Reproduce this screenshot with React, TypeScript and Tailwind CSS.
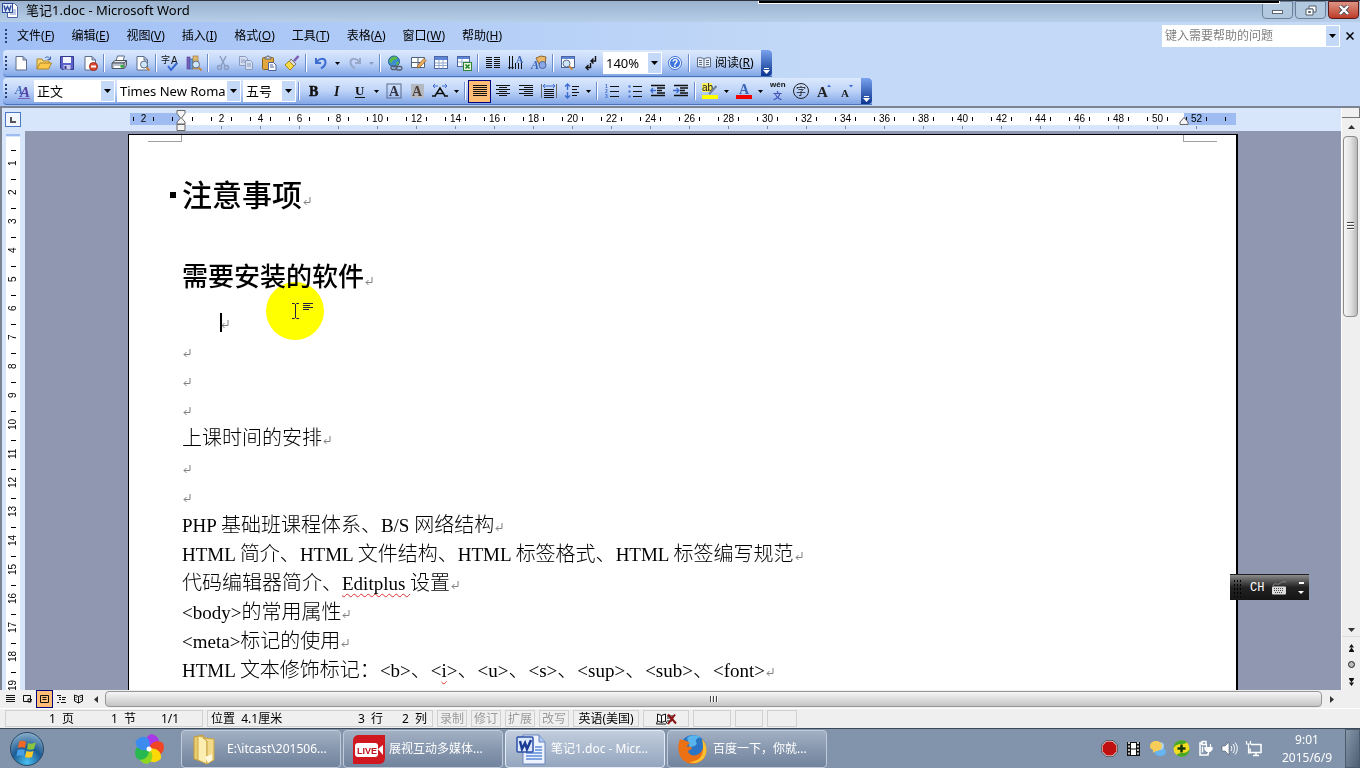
import type { ReactNode } from "react";

const UI = "font-['Noto_Sans','Noto_Sans_CJK_SC',sans-serif]";
const DOC = "font-['Liberation_Serif','Noto_Sans_CJK_SC',serif]";

const MENUS = [
  ["文件", "F"],
  ["编辑", "E"],
  ["视图", "V"],
  ["插入", "I"],
  ["格式", "O"],
  ["工具", "T"],
  ["表格", "A"],
  ["窗口", "W"],
  ["帮助", "H"],
];

// ---------- toolbar glyphs, all on a 16x16 grid ----------

const page = (
  <path d="M3 1.5h7l3.500 3.500v10H3z M10 1.500v3.500h3.500" fill="#fff" stroke="#5c6c8c" />
);
const lens = (
  <>
    <path d="M12.500 12.500l3 3" stroke="#c8843c" strokeWidth="2" />
    <circle cx="10" cy="9.500" r="3.500" fill="#cfe6fa" stroke="#5a6b85" />
  </>
);
const bars = (rows: [number, number][]) =>
  rows.map(([x, w], i) => <rect key={i} x={x} y={2 + i * 2} width={w} height="1" fill="#111" />);

const ICONS: Record<string, ReactNode> = {
  new: page,
  open: (
    <>
      <path d="M1 14V4h5l1 2h6v3" fill="#f7d774" stroke="#b08420" />
      <path d="M1 14l3-6h11.500l-3 6z" fill="#fbc84c" stroke="#b08420" />
      <path d="M9 3c2-2 4-1 5 1M14.500 1.500V4.500H11.500" fill="none" stroke="#3a62b0" />
    </>
  ),
  save: (
    <>
      <path d="M1.500 1.500h13v13H3l-1.500-1.500z" fill="#5c62cc" stroke="#33388c" />
      <rect x="4" y="2" width="8" height="6" fill="#f4f6ff" />
      <rect x="4.500" y="10" width="7" height="4.500" fill="#c9cdea" />
      <rect x="5.500" y="11" width="2" height="3" fill="#33388c" />
    </>
  ),
  permission: (
    <>
      {page}
      <circle cx="11.500" cy="11.500" r="4" fill="#dc4630" stroke="#a02c18" />
      <rect x="9" y="10.500" width="5" height="2" fill="#fff" />
    </>
  ),
  print: (
    <>
      <path d="M5 6l1.500-5h7l-1.500 5" fill="#fff" stroke="#5c6c8c" />
      <path d="M1 8l3-2.500h11.500L13 8z" fill="#e8ecf4" stroke="#555" />
      <path d="M1 8h12v5.500H1zM13 8l2.500-2.500v5L13 13.500" fill="#b8c0cc" stroke="#4c5464" />
      <rect x="3" y="11" width="7" height="2" fill="#fff" />
      <rect x="9.500" y="10" width="3" height="2.500" fill="#28b428" />
    </>
  ),
  preview: (
    <>
      {page}
      {lens}
    </>
  ),
  spell: (
    <>
      <text x="-2" y="8" fontSize="9" fill="#111" fontFamily="Noto Sans CJK SC">字</text>
      <text x="8" y="9" fontSize="10" fill="#111" fontFamily="Liberation Sans">A</text>
      <path d="M5 11l3 4 6-7" fill="none" stroke="#3468d0" strokeWidth="2" />
    </>
  ),
  research: (
    <>
      <rect x="1" y="2" width="3" height="12" fill="#7c60c0" stroke="#4c3c88" strokeWidth=".6" />
      <rect x="4" y="4" width="3" height="10" fill="#6c9ce0" stroke="#38609c" strokeWidth=".6" />
      <rect x="7" y="1" width="5" height="13" fill="#dcb870" stroke="#94702c" strokeWidth=".6" />
      {lens}
    </>
  ),
  cut: (
    <g fill="none" stroke="#8c9cc0" strokeWidth="1.400">
      <path d="M5 1l5 10M11 1L6 11" />
      <circle cx="4.500" cy="12.500" r="2" />
      <circle cx="11.500" cy="12.500" r="2" />
    </g>
  ),
  copy: (
    <g fill="#d4def0" stroke="#8c9cc0">
      <path d="M1.500 1.500h6l2 2v7h-8zM3 5h4M3 7h4" />
      <path d="M7.500 5.500h5l2 2v7h-7zM9 9h4M9 11h4" />
    </g>
  ),
  paste: (
    <>
      <rect x="1.500" y="2.500" width="11" height="12" rx="1" fill="#e0a83c" stroke="#8c6420" />
      <path d="M4 4V2h2l1-1.500L8 2h2v2z" fill="#d8dce8" stroke="#666" />
      <path d="M7.500 7.500h5l2.500 2.500v5.500H7.500zM9 10h3M9 12h4" fill="#fff" stroke="#4c64a0" />
    </>
  ),
  brush: (
    <>
      <path d="M14.500 1L10 6" stroke="#7c5cb8" strokeWidth="2.500" />
      <path d="M7 4l5 5-2 2-5-4z" fill="#d8d8e0" stroke="#777" />
      <path d="M5 6l5 5-4 4-5-5z" fill="#f4d848" stroke="#a8881c" />
    </>
  ),
  undo: <path d="M3 3v5h5M3.500 7.500C6 3 12 2.500 12.500 7c.2 3-2 5-4.500 6.500" fill="none" stroke="#3c6cd0" strokeWidth="2" />,
  redo: <path d="M13 3v5H8M12.500 7.500C10 3 4 2.500 3.500 7c-.2 3 2 5 4.500 6.500" fill="none" stroke="#98a8c8" strokeWidth="2" />,
  link: (
    <>
      <circle cx="7" cy="6.500" r="5.500" fill="#3c8cd8" stroke="#285c94" />
      <path d="M3 4c2-3 5-3 7-2 1 2-1 3-3 3s-1 3-3 3-2-3-1-4zM9 8l2-2 1 2-2 3z" fill="#58b848" />
      <rect x="4" y="11" width="6" height="3.500" rx="1.700" fill="none" stroke="#555f70" strokeWidth="1.300" />
      <rect x="9" y="11.500" width="6" height="3.500" rx="1.700" fill="none" stroke="#555f70" strokeWidth="1.300" />
    </>
  ),
  drawTable: (
    <>
      <path d="M1.500 2.500h13v10h-13zM1.500 7.500h13M8 2.500v10" fill="#fff" stroke="#52627c" />
      <path d="M14 3.500L8 10l-1 3 3-1 6-6.500z" fill="#f0b060" stroke="#8c5c28" strokeWidth=".8" />
    </>
  ),
  table: (
    <>
      <rect x="1.500" y="1.500" width="13" height="12" fill="#fff" stroke="#4c64a0" />
      <rect x="2" y="2" width="12" height="3" fill="#5c84d8" />
      <path d="M2 8h12M2 10.500h12M6 5v8.500M10 5v8.500" stroke="#90a8cc" />
    </>
  ),
  excel: (
    <>
      <rect x="1.500" y="1.500" width="12" height="10" fill="#fff" stroke="#4c64a0" />
      <rect x="2" y="2" width="11" height="2" fill="#5c84d8" />
      <path d="M2 7h11M6 4v7" stroke="#90a8cc" />
      <rect x="7.500" y="7.500" width="8" height="8" fill="#e4f4e0" stroke="#308430" />
      <path d="M9.500 9.500l4 4M13.500 9.500l-4 4" stroke="#208420" strokeWidth="1.500" />
    </>
  ),
  columns: (
    <>
      {[3, 5, 7, 9, 11, 13].map((y) => (
        <path key={y} d={`M1 ${y - 0.5}h6M9 ${y - 0.5}h6`} stroke="#111" />
      ))}
    </>
  ),
  direction: (
    <>
      <path d="M1.500 1v13M4.500 1v13M7.500 8v6M10.500 8v6M13.500 8v6" stroke="#111" />
      <path d="M0 12l1.500 2.500L3 12zM3 12l1.500 2.500L6 12z" fill="#111" />
      <text x="8" y="8" fontSize="10" fontWeight="bold" fill="#3c64b4" fontFamily="Liberation Serif">A</text>
    </>
  ),
  drawing: (
    <>
      <path d="M5 3l5-2 5 1-1 7-5 2z" fill="#e8b868" stroke="#8c6434" />
      <circle cx="11.500" cy="10" r="3.500" fill="#88a8e8" stroke="#4c64a0" />
      <text x="0" y="14" fontSize="12" fontWeight="bold" fontStyle="italic" fill="#3c64b4" fontFamily="Liberation Serif">A</text>
    </>
  ),
  docMap: (
    <>
      <rect x="1.500" y="1.500" width="13" height="11" fill="#fff" stroke="#4c64a0" />
      <rect x="2" y="2" width="12" height="2" fill="#5c84d8" />
      <circle cx="6.500" cy="8.500" r="3.500" fill="#cfe6fa" stroke="#5a6b85" />
      <path d="M9 11l3.500 3.500" stroke="#c8843c" strokeWidth="2" />
    </>
  ),
  marks: (
    <g stroke="#111" strokeWidth="1.400" fill="none">
      <path d="M12.500 1v5H8M10.500 3.500L8 6l2.500 2.500" />
      <path d="M7.500 8v4.500H3M5.500 10L3 12.500 5.500 15" />
    </g>
  ),
  help: (
    <>
      <circle cx="8" cy="8" r="6.500" fill="#fff" stroke="#3c6cd0" />
      <circle cx="8" cy="8" r="5" fill="#3c74e0" />
      <text x="5" y="12" fontSize="10" fontWeight="bold" fill="#fff" fontFamily="Liberation Sans">?</text>
    </>
  ),
  book: (
    <path d="M8 4C6 2.500 3.500 2.500 1.500 3v9c2-.5 4.500-.5 6.500 1 2-1.500 4.500-1.500 6.500-1V3C12.500 2.500 10 2.500 8 4zM8 4v9M3 5.500h3M3 7.500h3M3 9.500h3M10 5.500h3M10 7.500h3M10 9.500h3" fill="#e8f0fc" stroke="#5c6880" />
  ),
  styles: (
    <g fontFamily="Liberation Serif" fontWeight="bold" fontStyle="italic">
      <text x="0" y="11" fontSize="12" fill="#3c64b4">A</text>
      <text x="5" y="14" fontSize="15" fill="#5444a8">A</text>
      <path d="M3 15.500h12" stroke="#7c5cb8" />
    </g>
  ),
  bold: <text x="3" y="13" fontSize="14" fontWeight="bold" fill="#111" fontFamily="Liberation Serif" stroke="#111" strokeWidth=".5">B</text>,
  italic: <text x="5" y="13" fontSize="14" fontWeight="bold" fontStyle="italic" fill="#111" fontFamily="Liberation Serif">I</text>,
  underline: (
    <>
      <text x="3" y="12" fontSize="13" fontWeight="bold" fill="#111" fontFamily="Liberation Serif">U</text>
      <path d="M3 14.500h10" stroke="#111" />
    </>
  ),
  charBorder: (
    <>
      <rect x="1" y="1" width="14" height="14" fill="none" stroke="#5c6c8c" />
      <text x="3" y="13" fontSize="14" fontWeight="bold" fill="#334" fontFamily="Liberation Serif">A</text>
    </>
  ),
  charShade: (
    <>
      <rect x="2" y="1" width="13" height="14" fill="#b4b8c0" />
      <text x="3" y="13" fontSize="14" fontWeight="bold" fill="#4c4038" fontFamily="Liberation Serif">A</text>
    </>
  ),
  charScale: (
    <>
      <path d="M0 13h4M12 13h4M3 13l5-8 5 8M5 10.500h6" fill="none" stroke="#111" strokeWidth="1.500" />
      <path d="M1 3h5M3 1L1 3l2 2M10 3h5M13 1l2 2-2 2" fill="none" stroke="#3c6cd0" />
    </>
  ),
  justify: bars([[1, 14], [1, 14], [1, 14], [1, 14], [1, 14], [1, 14]]),
  center: bars([[1, 14], [4, 8], [1, 14], [4, 8], [1, 14], [4, 8]]),
  right: bars([[1, 14], [6, 9], [1, 14], [6, 9], [1, 14], [6, 9]]),
  distribute: (
    <>
      <path d="M.5 1v14M15.500 1v14" stroke="#666" />
      <path d="M2 3h12M4 1L2 3l2 2M12 1l2 2-2 2" fill="none" stroke="#3c6cd0" />
      <path d="M3 6.500h10M3 8.500h10M3 10.500h10M3 12.500h10M3 14.500h10" stroke="#111" />
    </>
  ),
  spacing: (
    <>
      <path d="M3.500 1v6M3.500 9v6M1 3.500L3.500 1 6 3.500M1 12.500L3.500 15 6 12.500" fill="none" stroke="#3c6cd0" strokeWidth="1.400" />
      <path d="M8 3.500h7M8 6.500h5M8 9.500h7M8 12.500h5" stroke="#111" />
    </>
  ),
  numbers: (
    <>
      <g fontSize="5" fill="#3c6cd0" fontFamily="Liberation Sans" fontWeight="bold">
        <text x="1" y="5">1</text>
        <text x="1" y="10">2</text>
        <text x="1" y="15">3</text>
      </g>
      <path d="M6 3.500h9M6 8.500h9M6 13.500h9" stroke="#111" />
    </>
  ),
  bullets: (
    <>
      <path d="M1.500 2.500h2v2h-2zM1.500 7.500h2v2h-2zM1.500 12.500h2v2h-2z" fill="#3c6cd0" />
      <path d="M6 3.500h9M6 8.500h9M6 13.500h9" stroke="#111" />
    </>
  ),
  outdent: (
    <>
      <path d="M1 2.500h14M7 5h8M7 7.500h5M7 10h8M1 12.500h14" stroke="#111" strokeWidth="1.500" />
      <path d="M6 7.500H1M3 5L.8 7.500 3 10" fill="none" stroke="#3c6cd0" strokeWidth="1.300" />
    </>
  ),
  indent: (
    <>
      <path d="M1 2.500h14M7 5h8M7 7.500h5M7 10h8M1 12.500h14" stroke="#111" strokeWidth="1.500" />
      <path d="M0 7.500h5M3.500 5l2.500 2.500L3.500 10" fill="none" stroke="#3c6cd0" strokeWidth="1.300" />
    </>
  ),
  highlight: (
    <>
      <rect x="0" y="0" width="10" height="9" fill="#f8f060" />
      <text x="0" y="8" fontSize="10" fill="#111" fontFamily="Liberation Sans">ab</text>
      <path d="M14.500 3L8 10l-1 1" stroke="#6c7c98" strokeWidth="2" />
      <rect x="0" y="12" width="16" height="4" fill="#ffff00" />
    </>
  ),
  fontColor: (
    <>
      <text x="3" y="11" fontSize="14" fontWeight="bold" fill="#3c64b4" fontFamily="Liberation Serif">A</text>
      <rect x="0" y="12" width="16" height="4" fill="#f00000" />
    </>
  ),
  pinyin: (
    <>
      <text x="0" y="4" fontSize="8" fill="#111" fontWeight="bold" fontFamily="Liberation Sans">wén</text>
      <text x="3" y="16" fontSize="9" fontWeight="bold" fill="#4450b8" fontFamily="Noto Sans CJK SC">文</text>
    </>
  ),
  enclose: (
    <>
      <circle cx="8" cy="8" r="7.500" fill="none" stroke="#222" />
      <text x="3" y="12" fontSize="10" fill="#111" fontFamily="Noto Sans CJK SC">字</text>
    </>
  ),
  grow: (
    <>
      <text x="1" y="14" fontSize="15" fontWeight="bold" fill="#222" fontFamily="Liberation Serif">A</text>
      <path d="M11 4l2-2.500L15 4z" fill="#3c6cd0" />
    </>
  ),
  shrink: (
    <>
      <text x="2" y="14" fontSize="11" fontWeight="bold" fill="#222" fontFamily="Liberation Serif">A</text>
      <path d="M10 2l2 2.500L14 2z" fill="#3c6cd0" />
    </>
  ),
};

function Tool({ name, active }: { name: string; active?: boolean }) {
  return (
    <button
      aria-label={name}
      className={
        active
          ? "flex h-[23px] w-[23px] shrink-0 items-center justify-center border border-[#000080] bg-[#ffbd76]"
          : "flex h-[23px] w-[23px] shrink-0 items-center justify-center"
      }
    >
      <svg viewBox="0 0 16 16" className="h-4 w-4 overflow-visible">
        {ICONS[name]}
      </svg>
    </button>
  );
}

function Sep() {
  return (
    <span className="flex w-[6px] shrink-0 justify-center">
      <span className="h-[18px] w-px bg-[#6a8ccb]" />
      <span className="h-[18px] w-px bg-white" />
    </span>
  );
}

function Triangle({ color = "#000" }: { color?: string }) {
  return (
    <svg viewBox="0 0 7 4" className="h-[4px] w-[7px]">
      <path d="M0 0h7L3.500 4z" fill={color} />
    </svg>
  );
}

function Drop({ label, color = "#000" }: { label: string; color?: string }) {
  return (
    <button aria-label={label} className="flex w-[11px] shrink-0 items-center justify-center">
      <svg viewBox="0 0 5 3" className="h-[3px] w-[5px]">
        <path d="M0 0h5L2.500 3z" fill={color} />
      </svg>
    </button>
  );
}

function Combo({ label, value, className }: { label: string; value: string; className: string }) {
  return (
    <span className={`relative flex h-[22px] shrink-0 border border-white bg-white ${className}`}>
      <select
        aria-label={label}
        defaultValue={value}
        className="w-full appearance-none overflow-hidden bg-white pr-[14px] pl-[2px] text-[13px] leading-[20px] text-black"
      >
        <option>{value}</option>
      </select>
      <span className="pointer-events-none absolute inset-y-0 right-0 flex w-[13px] items-center justify-center bg-[#c3d9f7]">
        <Triangle />
      </span>
    </span>
  );
}

function Grip() {
  return (
    <span className="flex w-[6px] shrink-0 flex-col items-center gap-[2px]">
      {[0, 1, 2, 3].map((i) => (
        <span key={i} className="h-[2px] w-[2px] bg-[#27417a]" />
      ))}
    </span>
  );
}

function Toolbar({ children }: { children: ReactNode }) {
  return (
    <div className="ml-[3px] flex h-[27px] w-max items-stretch rounded-l border-b border-[#4a72b8] bg-linear-to-b from-[#dce9fd] via-[#bdd3f8] to-[#82a6e6]">
      <div className="flex items-center">{children}</div>
      <button
        aria-label="toolbar options"
        className="flex w-[11px] flex-col items-center justify-end gap-px rounded-r bg-linear-to-b from-[#7aa2ee] to-[#0c3590] pb-[2px]"
      >
        <span className="h-px w-[5px] bg-white" />
        <Triangle color="#fff" />
      </button>
    </div>
  );
}

function TitleBar() {
  return (
    <header className="relative flex h-[22px] shrink-0 items-start border-t border-[#2c3440] bg-linear-to-b from-[#9ab2cd] to-[#b6cee8] pl-[2px]">
      <svg viewBox="0 0 16 16" className="mt-px h-4 w-4">
        <path d="M5.500 1.500h7l3 3v11h-10z" fill="#fff" stroke="#4c64a0" />
        <path d="M8 8h6M8 10h6M8 12h6" stroke="#7c94c8" />
        <rect x=".5" y="1.500" width="10" height="9" fill="#e4ecfc" stroke="#2c4c9c" />
        <path d="M2 3.500l1.500 5 2-4 2 4 1.500-5" fill="none" stroke="#2c4c9c" strokeWidth="1.400" />
      </svg>
      <h1 className="ml-2 flex-1 text-[13px] leading-[18px] text-black">笔记1.doc - Microsoft Word</h1>
      <div className="flex h-[18px] items-stretch gap-[2px] pr-[1px]">
        <button aria-label="minimize" className="flex w-[31px] items-center justify-center rounded-b-sm border border-[#6b7f99] bg-[#b2c8df]">
          <span className="mt-1 h-[4px] w-[11px] border border-[#5c6470] bg-white" />
        </button>
        <button aria-label="restore" className="flex w-[31px] items-center justify-center rounded-b-sm border border-[#6b7f99] bg-[#b2c8df]">
          <svg viewBox="0 0 12 11" className="h-[11px] w-3">
            <path d="M4 1h7v6H8V4H4z" fill="#fff" stroke="#555f6c" />
            <path d="M1 4h7v6H1z" fill="#fff" stroke="#555f6c" />
            <path d="M3.500 6.500h2v1h-2z" fill="#fff" stroke="#555f6c" />
          </svg>
        </button>
        <button aria-label="close" className="flex w-[31px] items-center justify-center rounded-b-sm border border-[#5a1a1a] bg-linear-to-b from-[#dc9484] to-[#bc3a26]">
          <svg viewBox="0 0 12 10" className="h-[10px] w-3">
            <path d="M2 1l8 8M10 1L2 9" stroke="#444c58" strokeWidth="4" />
            <path d="M2 1l8 8M10 1L2 9" stroke="#fff" strokeWidth="2.400" />
          </svg>
        </button>
      </div>
      <span className="absolute top-0 right-[80px] h-[3px] w-[522px] border border-t-0 border-white bg-black" />
    </header>
  );
}

function MenuBar() {
  return (
    <nav className="flex h-[28px] shrink-0 items-center">
      <div className="flex items-center pl-[3px]">
        <Grip />
        <div className="ml-[8px] flex gap-[17px]">
          {MENUS.map(([name, key]) => (
            <button key={key} className="text-[12px] leading-[18px] text-black">
              {name}(<u>{key}</u>)
            </button>
          ))}
        </div>
      </div>
      <div className="ml-auto flex items-center">
        <span className="flex h-[22px] w-[178px] border border-white bg-white">
          <input
            aria-label="键入需要帮助的问题"
            placeholder="键入需要帮助的问题"
            className="w-[163px] bg-white pl-[2px] text-[12px] placeholder-[#808080]"
          />
          <button aria-label="help list" className="flex w-[13px] items-center justify-center bg-[#c3d9f7]">
            <Triangle />
          </button>
        </span>
        <button aria-label="close document" className="flex w-[20px] items-center justify-center">
          <svg viewBox="0 0 8 8" className="h-2 w-2">
            <path d="M.5.5l7 7M7.500.5l-7 7" stroke="#000" strokeWidth="1.500" />
          </svg>
        </button>
      </div>
    </nav>
  );
}

function StandardBar() {
  return (
    <Toolbar>
      <Grip />
      {["new", "open", "save", "permission"].map((n) => <Tool key={n} name={n} />)}
      <Sep />
      {["print", "preview"].map((n) => <Tool key={n} name={n} />)}
      <Sep />
      {["spell", "research"].map((n) => <Tool key={n} name={n} />)}
      <Sep />
      {["cut", "copy", "paste", "brush"].map((n) => <Tool key={n} name={n} />)}
      <Sep />
      <Tool name="undo" />
      <Drop label="undo list" />
      <Tool name="redo" />
      <Drop label="redo list" color="#8c9cc0" />
      <Sep />
      {["link", "drawTable", "table", "excel"].map((n) => <Tool key={n} name={n} />)}
      <Sep />
      {["columns", "direction", "drawing"].map((n) => <Tool key={n} name={n} />)}
      <Sep />
      {["docMap", "marks"].map((n) => <Tool key={n} name={n} />)}
      <Combo label="显示比例" value="140%" className="mx-px w-[59px]" />
      <Tool name="help" />
      <Sep />
      <button className="flex items-center gap-[3px] pr-[7px] pl-[4px] text-[12px] leading-[18px]">
        <svg viewBox="0 0 16 16" className="h-4 w-4">{ICONS.book}</svg>
        <span>阅读(<u>R</u>)</span>
      </button>
    </Toolbar>
  );
}

function FormatBar() {
  return (
    <Toolbar>
      <Grip />
      <div className="flex items-center pl-[2px]">
        <Tool name="styles" />
        <div className="flex gap-[2px]">
          <Combo label="样式" value="正文" className="w-[81px]" />
          <Combo label="字体" value="Times New Roman" className="w-[124px]" />
          <Combo label="字号" value="五号" className="w-[53px]" />
        </div>
      </div>
      <Sep />
      {["bold", "italic", "underline"].map((n) => <Tool key={n} name={n} />)}
      <Drop label="underline style" />
      {["charBorder", "charShade", "charScale"].map((n) => <Tool key={n} name={n} />)}
      <Drop label="scale list" />
      <Sep />
      <Tool name="justify" active />
      {["center", "right", "distribute", "spacing"].map((n) => <Tool key={n} name={n} />)}
      <Drop label="spacing list" />
      <Sep />
      {["numbers", "bullets", "outdent", "indent"].map((n) => <Tool key={n} name={n} />)}
      <Sep />
      <Tool name="highlight" />
      <Drop label="highlight color" />
      <Tool name="fontColor" />
      <Drop label="font color" />
      <div className="flex pr-[3px]">
        {["pinyin", "enclose", "grow", "shrink"].map((n) => <Tool key={n} name={n} />)}
      </div>
    </Toolbar>
  );
}

// numbers every two characters, with a tick on both sides
const RULER = ["2", "", ...Array.from({ length: 26 }, (_, i) => String(i * 2 + 2)), ""];

function Ruler() {
  return (
    <div className="flex h-[23px] shrink-0 bg-[#d8e6fc]">
      <div className="flex w-[23px] shrink-0 items-center pl-[3px]">
        <button aria-label="tab stop" className="flex h-[15px] w-[16px] items-center justify-center border border-[#4a78c4] bg-[#f2f7ff]">
          <span className="h-[6px] w-[6px] border-b-2 border-l-2 border-[#555]" />
        </button>
      </div>
      <div className="min-w-0 flex-1">
        <div className="relative mx-auto mt-[5px] w-[1110px]">
          <div className="flex h-[12px] px-[2px]">
            <span className="w-[52px] bg-[#9ebcf2]" />
            <span className="flex-1 bg-white" />
            <span className="w-[52px] bg-[#9ebcf2]" />
          </div>
          <div className="absolute inset-x-[2px] top-0 flex h-[18px] overflow-hidden font-['Liberation_Sans',sans-serif] text-[10px] leading-[12px] text-black">
            <div className="-ml-[6px] flex shrink-0">
              {RULER.map((n, i) => (
                <span key={i} className="flex w-[39px] shrink-0 flex-col items-center">
                  <span className="flex h-[12px] w-[21px] items-center justify-between">
                    <i className="h-[4px] w-px bg-black" />
                    {n}
                    <i className="h-[4px] w-px bg-black" />
                  </span>
                  {n && i > 1 && <i className="mt-px h-[3px] w-px bg-[#7a8aa6]" />}
                </span>
              ))}
            </div>
          </div>
          <svg viewBox="0 0 10 21" className="absolute -top-[3px] left-[48px] h-[21px] w-[10px]">
            <path d="M1 .5h8v3L5.500 8 9 12v2H1v-2l3.500-4L1 3.500zM1 14.500h8v6H1z" fill="#f4f4f4" stroke="#666" />
          </svg>
          <svg viewBox="0 0 10 8" className="absolute top-[4px] left-[1051px] h-2 w-[10px]">
            <path d="M5 .5L9 5v2.500H1V5z" fill="#f4f4f4" stroke="#666" />
          </svg>
        </div>
      </div>
    </div>
  );
}

function VerticalRuler() {
  return (
    <div className="w-[23px] shrink-0 overflow-hidden bg-[#d8e6fc] pl-[4px]">
      <div className="mt-[3px] h-[2px] w-[14px] bg-[#9ebcf2]" />
      <div className="mt-px h-full w-[14px] bg-white pt-[13px] font-['Liberation_Sans',sans-serif] text-[10px] text-black">
        {Array.from({ length: 19 }, (_, i) => (
          <div key={i} className="flex h-[29px] flex-col items-center">
            <i className="h-px w-[5px] bg-black" />
            <span className="flex h-[25px] rotate-180 items-center justify-center leading-[14px] [writing-mode:vertical-rl]">
              {i + 1}
            </span>
          </div>
        ))}
      </div>
    </div>
  );
}

function Mark() {
  return (
    <svg viewBox="0 0 8 8" className="ml-px inline-block h-2 w-2 align-[1px]">
      <path d="M7 0v5.500H1M3.500 3L1 5.500 3.500 8" fill="none" stroke="#808080" />
    </svg>
  );
}

// western runs are set one pixel smaller than the chinese ones
function Latin({ children, wavy }: { children: ReactNode; wavy?: boolean }) {
  return (
    <span
      className={
        wavy
          ? "text-[19px] underline decoration-[#e03030] decoration-wavy decoration-1 underline-offset-[3px] [text-decoration-skip-ink:none]"
          : "text-[19px]"
      }
    >
      {children}
    </span>
  );
}

function Line({ children }: { children?: ReactNode }) {
  return (
    <p className="h-[29px] text-[20px] leading-[29px] font-light whitespace-pre">
      {children}
      <Mark />
    </p>
  );
}

function DocumentPage() {
  return (
    <article className={`relative mx-auto mt-[3px] w-[1110px] border border-r-2 border-black bg-white pb-[80px] pl-[53px] text-black ${DOC}`}>
      <span className="absolute top-0 left-[19px] h-[7px] w-[34px] border-r border-b border-[#a0a0a0]" />
      <span className="absolute top-0 right-[19px] h-[7px] w-[34px] border-b border-l border-[#a0a0a0]" />
      <h1 className="relative pt-[31px] text-[30px] leading-[60px] font-medium">
        <span className="absolute top-[57px] -left-[12px] h-[6px] w-[6px] bg-black" />
        注意事项
        <Mark />
      </h1>
      <h2 className="mt-[22px] text-[26px] leading-[60px] font-medium">
        需要安装的软件
        <Mark />
      </h2>
      <div className="relative pl-[38px]">
        <span className="absolute top-[5px] left-[38px] h-[19px] w-[2px] bg-black" />
        <Line />
      </div>
      <Line />
      <Line />
      <Line />
      <Line>上课时间的安排</Line>
      <Line />
      <Line />
      <Line>
        <Latin>PHP </Latin>基础班课程体系、<Latin>B/S </Latin>网络结构
      </Line>
      <Line>
        <Latin>HTML </Latin>简介、<Latin>HTML </Latin>文件结构、<Latin>HTML </Latin>标签格式、<Latin>HTML </Latin>标签编写规范
      </Line>
      <Line>
        代码编辑器简介、<Latin wavy>Editplus </Latin>设置
      </Line>
      <Line>
        <Latin>{"<body>"}</Latin>的常用属性
      </Line>
      <Line>
        <Latin>{"<meta>"}</Latin>标记的使用
      </Line>
      <Line>
        <Latin>HTML </Latin>文本修饰标记：<Latin>{"<b>"}</Latin>、<Latin>{"<"}</Latin>
        <Latin wavy>i</Latin>
        <Latin>{">"}</Latin>、<Latin>{"<u>"}</Latin>、<Latin>{"<s>"}</Latin>、<Latin>{"<sup>"}</Latin>、<Latin>{"<sub>"}</Latin>、<Latin>{"<font>"}</Latin>
      </Line>
      <div className="absolute top-[147px] left-[137px] h-[58px] w-[58px] rounded-full bg-[#ffff00] mix-blend-multiply" />
      <svg viewBox="0 0 22 18" className="absolute top-[167px] left-[162px] h-[18px] w-[22px]">
        <path d="M1 1.500h2.500l1 1 1-1H8M4.500 2v14M1 16.500h2.500l1-1 1 1H8" fill="none" stroke="#222244" />
        <path d="M12 1.500h10M12 3.500h7M12 5.500h10M12 7.500h6" stroke="#222244" />
      </svg>
    </article>
  );
}

function VerticalScroll() {
  return (
    <div className="flex w-[19px] shrink-0 flex-col items-center border-l border-white bg-[#efefef]">
      <span className="h-[10px] w-full border-r border-b border-[#777] bg-[#f0f0f0]" />
      <button aria-label="scroll up" className="flex h-[18px] w-full items-center justify-center">
        <svg viewBox="0 0 7 4" className="h-[4px] w-[7px]">
          <path d="M0 4h7L3.500 0z" fill="#333" />
        </svg>
      </button>
      <div className="w-full flex-1 px-px">
        <div className="flex h-[37%] w-[15px] flex-col items-center justify-center gap-px rounded-sm border border-[#8c8c8c] bg-linear-to-r from-[#f6f6f6] via-[#e2e2e2] to-[#b8b8b8]">
          {[0, 1, 2].map((i) => (
            <span key={i} className="h-[2px] w-[7px] border-t border-[#444] bg-white" />
          ))}
        </div>
      </div>
      <button aria-label="scroll down" className="flex h-[12px] w-full items-center justify-center">
        <Triangle color="#333" />
      </button>
      <div className="flex w-full flex-col items-center border-t border-[#ddd] pt-[2px]">
        <button aria-label="previous page" className="flex h-[17px] items-center">
          <svg viewBox="0 0 7 8" className="h-2 w-[7px]">
            <path d="M1 3.500L3.500 0 6 3.500zM1 7L3.500 3.500 6 7zM1 7h5v1H1z" fill="#111" />
          </svg>
        </button>
        <button aria-label="browse object" className="flex h-[17px] items-center">
          <span className="h-[7px] w-[7px] rounded-full border border-[#222] bg-[#bbb]" />
        </button>
        <button aria-label="next page" className="flex h-[17px] items-center">
          <svg viewBox="0 0 7 8" className="h-2 w-[7px]">
            <path d="M1 0h5v1H1zM1 1h5L3.500 4.500zM1 4.500h5L3.500 8z" fill="#111" />
          </svg>
        </button>
      </div>
    </div>
  );
}

const VIEWS: [string, string][] = [
  ["normal view", "M1 1.500h9M1 3.500h9M1 5.500h9M1 7.500h9"],
  ["web view", "M1.500 1.500h7v6h-7zM6 5h3v3H6zM8 4l2 2"],
  ["print view", "M1.500 1.500h8v7h-8zM3.500 3.500h4M3.500 5.500h4"],
  ["outline view", "M1 1.500h4M3 3.500h2M6 3.500h4M3 5.500h2M6 5.500h3M1 8.500h2M5 8.500h5"],
  ["reading view", "M5.500 2.500L1.500 1v6l4 2 4-2V1zM5.500 2.500V9M3 3v1M3 5v1M8 3v1M8 5v1"],
];

function ViewBar() {
  return (
    <div className="flex h-[18px] shrink-0 items-stretch bg-[#efefef] pl-[2px]">
      {VIEWS.map(([label, d], i) => (
        <button
          key={label}
          aria-label={label}
          className={
            i === 2
              ? "flex w-[17px] items-center justify-center border border-[#000080] bg-[#ffbd76]"
              : "flex w-[17px] items-center justify-center"
          }
        >
          <svg viewBox="0 0 11 10" className="h-[10px] w-[11px] shrink-0">
            <path d={d} fill="none" stroke="#111" />
          </svg>
        </button>
      ))}
      <button aria-label="scroll left" className="flex w-[18px] items-center justify-center">
        <svg viewBox="0 0 4 7" className="h-[7px] w-[4px]">
          <path d="M4 0v7L0 3.500z" fill="#333" />
        </svg>
      </button>
      <div className="my-px flex flex-1 items-center justify-center gap-px rounded-sm border border-[#979797] bg-linear-to-b from-[#f6f6f6] via-[#dedede] to-[#c4c4c4]">
        {[0, 1, 2].map((i) => (
          <span key={i} className="h-[6px] w-[2px] border-l border-[#444] bg-white" />
        ))}
      </div>
      <button aria-label="scroll right" className="mr-[18px] flex w-[20px] items-center justify-center">
        <svg viewBox="0 0 4 7" className="h-[7px] w-[4px]">
          <path d="M0 0v7l4-3.500z" fill="#333" />
        </svg>
      </button>
    </div>
  );
}

function StatusBar() {
  const cell = "flex h-[17px] items-center border border-[#d0d0d0]";
  return (
    <footer className="flex h-[20px] shrink-0 items-center gap-[4px] border-t border-white bg-[#efefef] pl-[5px] text-[12px] leading-[15px] text-black">
      <div className={`${cell} w-[198px] pl-[43px]`}>
        <span className="w-[62px]">1&nbsp; 页</span>
        <span className="w-[50px]">1&nbsp; 节</span>
        <span>1/1</span>
      </div>
      <div className={`${cell} w-[226px] pl-[3px]`}>
        <span className="w-[147px]">位置&nbsp; 4.1厘米</span>
        <span className="w-[44px]">3&nbsp; 行</span>
        <span>2&nbsp; 列</span>
      </div>
      {["录制", "修订", "扩展", "改写"].map((t) => (
        <button key={t} className={`${cell} w-[30px] justify-center text-[#9a9a9a]`}>
          {t}
        </button>
      ))}
      <div className={`${cell} w-[66px] justify-center whitespace-nowrap`}>英语(美国)</div>
      <div className={`${cell} w-[46px] justify-center`}>
        <svg viewBox="0 0 22 12" className="h-3 w-[22px]">
          <path d="M6.500 2.500L2.500 1v7l-1 3h9.500M6.500 2.500L10.500 1v7l-4 1.500L2.500 8M6.500 2.500v7M10.500 8l2 3" fill="#fff" stroke="#111" />
          <path d="M12 3h6M12 5h5M12 8h5" stroke="#111" />
          <path d="M13 1.500l8 9M20 1.500l-7 9.500" stroke="#8c1010" strokeWidth="2" />
        </svg>
      </div>
      <div className={`${cell} w-[38px]`} />
      <div className={`${cell} w-[28px]`} />
      <div className={`${cell} w-[30px]`} />
    </footer>
  );
}

function Task({ icon, title, active }: { icon: ReactNode; title: string; active?: boolean }) {
  return (
    <button
      className={
        active
          ? "flex h-[38px] w-[160px] items-center gap-[4px] rounded-sm border border-[#e4ebf4] bg-linear-to-b from-[#c2cddd] to-[#93a5be] px-[9px] text-[12px] text-white"
          : "flex h-[38px] w-[160px] items-center gap-[4px] rounded-sm border border-[#c0cad8] bg-linear-to-b from-[#a3b1c4] via-[#8797ae] to-[#71849e] px-[9px] text-[12px] text-white"
      }
    >
      <svg viewBox="0 0 32 32" className="h-8 w-8 shrink-0">{icon}</svg>
      <span className="whitespace-nowrap">{title}</span>
    </button>
  );
}

const folderIcon = (
  <>
    <path d="M3 4l9-2v27l-9-3z" fill="#e8cc70" stroke="#c09c38" />
    <path d="M7 3l9 2v26l-9-4z" fill="#fbeeb0" stroke="#cca848" />
    <path d="M12 5l11 1v21l-7 4V8z" fill="#f2da88" stroke="#c8a444" />
    <path d="M14 24l7-3v6l-4 3z" fill="#fff8dc" />
  </>
);

const liveIcon = (
  <>
    <path d="M6 2h26v22c0 5-2 7-7 7H0V9c0-5 2-7 6-7z" fill="#d01820" />
    <rect x="2" y="10" width="23" height="14" rx="3" fill="#fff" />
    <path d="M25 16l5-4v10z" fill="#fff" />
    <text x="4" y="21" fontSize="9" fontWeight="bold" fill="#c01018" fontFamily="Liberation Sans">LIVE</text>
  </>
);

const wordIcon = (
  <>
    <path d="M8 2h16l6 7v22H8z" fill="#eef4ff" stroke="#6884bc" />
    <path d="M24 2v7h6" fill="#a8c4f0" stroke="#6884bc" />
    <path d="M11 20h16M11 23h16M11 26h16M20 14h7M20 17h7" stroke="#5c88d8" strokeWidth="1.500" />
    <rect x="2" y="4" width="16" height="15" rx="1" fill="#dce8fc" stroke="#2c50a8" strokeWidth="1.500" />
    <path d="M5 8l2 8 3-6 2 6 4-9" fill="none" stroke="#1c3c94" strokeWidth="2.500" />
  </>
);

const firefoxIcon = (
  <>
    <circle cx="16" cy="15" r="13" fill="#2c74c4" />
    <path d="M10 5c4-4 11-3 15 0-3-1-5 0-6 2s2 3 0 5-5 1-6 3z" fill="#58b4ec" />
    <path d="M3 6c1 1 2 1 4 1 1 1 4 1 6 3-2 1-3 2-3 4 2-1 4 0 5 1-1 2-3 2-4 3 1 5 8 6 12 2 4-4 4-9 2-14 5 5 6 13 2 19-5 7-16 8-22 1C0 20 1 11 3 6z" fill="#ec7014" />
    <path d="M25 6c5 5 6 13 2 19-4 5-10 6-15 4 8 0 14-5 14-12 0-4 0-7-1-11z" fill="#fbc030" />
  </>
);

function Tray() {
  return (
    <div className="ml-auto flex items-center gap-[7px]">
      <svg viewBox="0 0 17 17" className="h-[17px] w-[17px]">
        <path d="M5.500 1h6L16 5.500v6L11.500 16h-6L1 11.500v-6z" fill="#c01010" stroke="#fff" />
        <path d="M5 .5h7L16.500 5v7L12 16.500H5L.5 12V5z" fill="none" stroke="#222" strokeWidth=".6" />
      </svg>
      <svg viewBox="0 0 17 17" className="h-[17px] w-[17px]">
        <rect x="2" y="2" width="13" height="14" fill="#111" />
        <path d="M6 3h5v5.500H6zM6 9.500h5V15H6z" fill="#fff" />
        <path d="M4 2v14M13 2v14" stroke="#fff" strokeWidth="1.500" strokeDasharray="2 1.500" />
      </svg>
      <svg viewBox="0 0 17 17" className="h-[17px] w-[17px]">
        <path d="M6 12c0-3 3-4 5-4 3 0 6 1 6 4 0 2-2 4-5 4-4 0-6-1-6-4z" fill="#68b4f0" />
        <path d="M9 3c3-2 6 0 6 3s-2 4-4 4z" fill="#a4d4f8" />
        <path d="M1 6c0-3 3-5 6-5s6 2 6 5-3 5-6 5l-3 2v-3C2 9 1 8 1 6z" fill="#f8cc58" />
      </svg>
      <svg viewBox="0 0 17 17" className="h-[17px] w-[17px]">
        <circle cx="8.500" cy="8.500" r="8" fill="#f4dc20" />
        <path d="M.5 9C2 4 7 4 9 4c3 0 4-1 5-2C9-2 0 1 .5 9z" fill="#48a828" />
        <path d="M16.500 8c-1 5-6 5-8 5-3 0-4 1-5 2 5 4 14 1 13-7z" fill="#48a828" />
        <path d="M8.500 4.500v8M4.500 8.500h8" stroke="#14380c" strokeWidth="2.500" />
      </svg>
      <svg viewBox="0 0 17 17" className="h-[17px] w-[17px]">
        <path d="M5 3H3v12h8v-2M5 1.500h4v3H5zM5.500 6.500v6" fill="none" stroke="#fff" strokeWidth="1.500" />
        <path d="M9.500 4v3M13.500 4v3M8 7.500h7v2l-2 2h-3l-2-2zM11.500 11v3" fill="#fff" stroke="#fff" strokeWidth="1.200" />
      </svg>
      <svg viewBox="0 0 17 17" className="h-[17px] w-[17px]">
        <path d="M1 6h3l4-4v13l-4-4H1z" fill="#fff" stroke="#4c5868" strokeWidth=".6" />
        <path d="M10 6c1 1.500 1 3.500 0 5M12 4c2 2.500 2 6.500 0 9M14 2.500c3 3.500 3 8.500 0 12" fill="none" stroke="#fff" />
      </svg>
      <svg viewBox="0 0 17 17" className="h-[17px] w-[17px]">
        <path d="M6 4.500h10v8H5v-4M8 15.500h6M11 13v2" fill="none" stroke="#fff" strokeWidth="1.500" />
        <path d="M1.500 1v3h4V1M3.500 4v9h2" fill="none" stroke="#fff" strokeWidth="1.200" />
      </svg>
      <div className="ml-[8px] w-[60px] text-center text-[12px] leading-[18px] text-white">
        <div>9:01</div>
        <div>2015/6/9</div>
      </div>
      <button aria-label="show desktop" className="ml-[1px] h-[39px] w-[15px] border border-[#4c5c70] bg-linear-to-br from-[#8796a8] to-[#4e6076]" />
    </div>
  );
}

const PETALS: [number, string][] = [
  [20, "#a838e8"],
  [80, "#f04424"],
  [140, "#fcd808"],
  [200, "#8cd820"],
  [240, "#28b850"],
  [310, "#3c8cf0"],
];

function Taskbar() {
  return (
    <div className="flex h-[40px] shrink-0 items-center border-t border-[#3c4858] bg-[#8194ab] pl-[9px]">
      <button aria-label="start">
        <svg viewBox="0 0 36 36" className="h-9 w-9">
          <defs>
            <radialGradient id="orb" cx="50%" cy="90%" r="90%">
              <stop offset="0" stopColor="#48c0f0" />
              <stop offset=".5" stopColor="#1c5c94" />
              <stop offset="1" stopColor="#8cb0cc" />
            </radialGradient>
          </defs>
          <circle cx="18" cy="18" r="16.500" fill="url(#orb)" stroke="#2c4864" />
          <path d="M10 11c3-2 5-1 7 0l-1 6c-2-1-5-1-7 0z" fill="#f06828" />
          <path d="M19 12c2 1 5 1 8-1l-2 7c-2 1-5 1-7 0z" fill="#88c440" />
          <path d="M8.500 19c3-1 5-1 7 0l-1 6c-2-1-5-1-7 0z" fill="#48a0e8" />
          <path d="M17.500 20c2 1 5 1 7 0l-1.500 6c-2 1-5 1-7 0z" fill="#fcc828" />
        </svg>
      </button>
      <button aria-label="browser" className="ml-[88px]">
        <svg viewBox="0 0 32 32" className="h-8 w-8">
          {PETALS.map(([deg, fill]) => (
            <path key={deg} d="M16 16C9 13 8 5 13 1c7-1 12 4 10 9-2 3-4 5-7 6z" fill={fill} transform={`rotate(${deg} 16 16)`} />
          ))}
          <circle cx="16" cy="16" r="2.500" fill="#fff" />
        </svg>
      </button>
      <div className="ml-[16px] flex gap-[2px]">
        <Task icon={folderIcon} title="E:\itcast\201506..." />
        <Task icon={liveIcon} title="展视互动多媒体..." />
        <Task icon={wordIcon} title="笔记1.doc - Micr..." active />
        <Task icon={firefoxIcon} title="百度一下，你就..." />
      </div>
      <Tray />
    </div>
  );
}

function LanguageBar() {
  return (
    <div className="absolute right-[51px] bottom-[168px] flex h-[26px] w-[79px] items-center border-t border-[#222] bg-linear-to-b from-[#8c8c8c] via-[#222] to-[#151515] text-white">
      <span className="ml-[3px] h-[18px] w-[10px] bg-[radial-gradient(#000_1px,transparent_1px)] bg-size-[3px_4px]" />
      <span className="ml-[7px] w-[15px] font-['Liberation_Mono',monospace] text-[12px]">CH</span>
      <svg viewBox="0 0 16 14" className="ml-[6px] h-[14px] w-4">
        <path d="M2 5c1-4 4-1 6-2s3-3 7-2" fill="none" stroke="#888" />
        <rect x="1" y="5.500" width="14" height="8" rx="1" fill="#ddd" />
        <path d="M3 7.500h10M3 9.500h10M4 11.500h8" stroke="#444" strokeDasharray="1 1" />
      </svg>
      <span className="ml-[11px] flex flex-col items-center gap-[7px]">
        <i className="h-[2px] w-[5px] bg-white" />
        <svg viewBox="0 0 6 3" className="h-[3px] w-[6px]">
          <path d="M0 0h6L3 3z" fill="#fff" />
        </svg>
      </span>
    </div>
  );
}

export default function App() {
  return (
    <div className={`relative flex h-screen flex-col overflow-hidden bg-[#c3d9f7] ${UI}`}>
      <TitleBar />
      <div className="shrink-0 bg-linear-to-r from-[#a0bff5] to-[#c3d9f7] to-60%">
        <MenuBar />
        <div className="flex flex-col gap-px pb-px">
          <StandardBar />
          <FormatBar />
        </div>
      </div>
      <main className="flex min-h-0 flex-1 border-t-2 border-l-2 border-[#7c8494]">
        <div className="flex min-w-0 flex-1 flex-col">
          <Ruler />
          <div className="flex min-h-0 flex-1">
            <VerticalRuler />
            <div className="min-w-0 flex-1 overflow-hidden bg-[#9098b1]">
              <DocumentPage />
            </div>
          </div>
        </div>
        <VerticalScroll />
      </main>
      <ViewBar />
      <StatusBar />
      <Taskbar />
      <LanguageBar />
    </div>
  );
}
